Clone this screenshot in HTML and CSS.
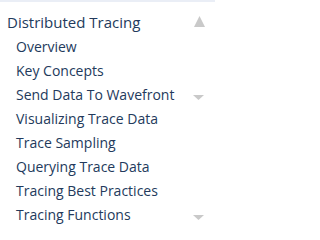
FILE: index.html
```html
<!DOCTYPE html>
<html>
<head>
<meta charset="utf-8">
<link rel="stylesheet" href="styles.css">
</head>
<body>
<nav class="toc">
  <div class="section">
    <span class="title">Distributed Tracing</span>
    <svg class="up" width="11" height="11" viewBox="0 0 11 11"><polygon points="5.5,0 11,11 0,11" fill="#c9c9c9"/></svg>
  </div>
  <ul class="items">
    <li><span>Overview</span></li>
    <li><span>Key Concepts</span></li>
    <li><span>Send Data To Wavefront</span><svg class="down" width="11" height="5" viewBox="0 0 11 5"><polygon points="0,0 11,0 5.5,5" fill="#c9c9c9"/></svg></li>
    <li><span>Visualizing Trace Data</span></li>
    <li><span>Trace Sampling</span></li>
    <li><span>Querying Trace Data</span></li>
    <li><span>Tracing Best Practices</span></li>
    <li><span>Tracing Functions</span><svg class="down" width="11" height="5" viewBox="0 0 11 5"><polygon points="0,0 11,0 5.5,5" fill="#c9c9c9"/></svg></li>
  </ul>
</nav>
</body>
</html>
```

FILE: styles.css
```css
html, body {
  margin: 0;
  padding: 0;
  background: #ffffff;
}
body {
  font-family: "Open Sans", "Liberation Sans", sans-serif;
  color: #233a5c;
}
.toc {
  width: 215px;
  box-sizing: border-box;
  border-top: 2px solid #eaeef6;
  padding: 8px 10px 0 7px;
}
.section {
  display: flex;
  align-items: center;
  justify-content: space-between;
  height: 24px;
}
.title {
  font-size: 15px;
  line-height: 24px;
}
.up {
  display: block;
  margin-top: -1px;
}
.items {
  list-style: none;
  margin: 1px 0 0 0;
  padding: 0 0 0 9px;
}
.items li {
  display: flex;
  align-items: center;
  justify-content: space-between;
  font-size: 14px;
  line-height: 24px;
  height: 24px;
}
.down {
  display: block;
  margin-top: 5px;
  margin-right: 1px;
}
```
